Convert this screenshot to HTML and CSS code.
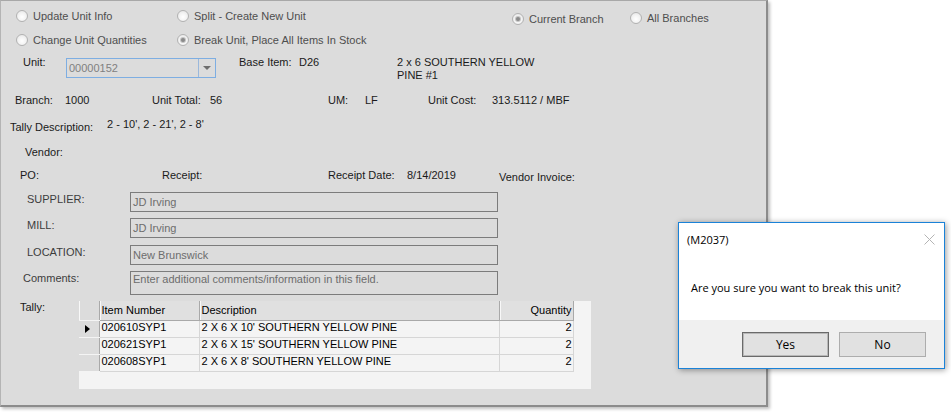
FILE: index.html
```html
<!DOCTYPE html>
<html lang="en">
<head>
    <meta charset="UTF-8">
    <title>Unit Maintenance</title>
    <link rel="stylesheet" href="styles.css">
</head>
<body>
    <div class="window">
        <!-- Mode selection -->
        <div class="row row-modes">
            <label class="radio"><span class="dot"></span>Update Unit Info</label>
            <label class="radio"><span class="dot"></span>Split - Create New Unit</label>
            <label class="radio radio-branch"><span class="dot on"></span>Current Branch</label>
            <label class="radio radio-branch radio-all"><span class="dot"></span>All Branches</label>
        </div>
        <div class="row row-modes2">
            <label class="radio"><span class="dot"></span>Change Unit Quantities</label>
            <label class="radio"><span class="dot on"></span>Break Unit, Place All Items In Stock</label>
        </div>

        <!-- Unit header -->
        <div class="row row-unit">
            <div class="label">Unit:</div>
            <div class="combo">
                <span class="combo-text">00000152</span>
                <span class="combo-btn"><span class="arrow"></span></span>
            </div>
            <div class="label">Base Item:</div>
            <div class="label">D26</div>
            <div class="label desc">2 x 6 SOUTHERN YELLOW<br>PINE #1</div>
        </div>
        <div class="row row-totals">
            <div class="label">Branch:</div>
            <div class="label">1000</div>
            <div class="label">Unit Total:</div>
            <div class="label">56</div>
            <div class="label">UM:</div>
            <div class="label">LF</div>
            <div class="label">Unit Cost:</div>
            <div class="label">313.5112 / MBF</div>
        </div>
        <div class="row row-tally-desc">
            <div class="label drop">Tally Description:</div>
            <div class="label">2 - 10', 2 - 21', 2 - 8'</div>
        </div>
        <div class="row row-vendor">
            <div class="label">Vendor:</div>
        </div>
        <div class="row row-po">
            <div class="label">PO:</div>
            <div class="label">Receipt:</div>
            <div class="label">Receipt Date:</div>
            <div class="label">8/14/2019</div>
            <div class="label drop-sm">Vendor Invoice:</div>
        </div>

        <!-- Receipt details -->
        <div class="row field-row">
            <div class="field-label">SUPPLIER:</div>
            <div class="textbox">JD Irving</div>
        </div>
        <div class="row field-row field-mill">
            <div class="field-label">MILL:</div>
            <div class="textbox">JD Irving</div>
        </div>
        <div class="row field-row">
            <div class="field-label">LOCATION:</div>
            <div class="textbox">New Brunswick</div>
        </div>
        <div class="row field-row field-comments">
            <div class="field-label">Comments:</div>
            <div class="textbox textbox-multi">Enter additional comments/information in this field.</div>
        </div>

        <!-- Tally grid -->
        <div class="row tally-row">
            <div class="label">Tally:</div>
            <div class="grid">
                <table>
                    <thead>
                        <tr>
                            <th class="rowhead"></th>
                            <th class="col-item">Item Number</th>
                            <th class="col-desc">Description</th>
                            <th class="col-qty">Quantity</th>
                        </tr>
                    </thead>
                    <tbody>
                        <tr>
                            <td class="rowhead"><span class="current"></span></td>
                            <td>020610SYP1</td>
                            <td>2 X 6 X 10' SOUTHERN YELLOW PINE</td>
                            <td class="num">2</td>
                        </tr>
                        <tr>
                            <td class="rowhead"></td>
                            <td>020621SYP1</td>
                            <td>2 X 6 X 15' SOUTHERN YELLOW PINE</td>
                            <td class="num">2</td>
                        </tr>
                        <tr>
                            <td class="rowhead"></td>
                            <td>020608SYP1</td>
                            <td>2 X 6 X 8' SOUTHERN YELLOW PINE</td>
                            <td class="num">2</td>
                        </tr>
                    </tbody>
                </table>
            </div>
        </div>
    </div>

    <!-- Confirmation message box -->
    <div class="msgbox">
        <div class="msgbox-title">
            <span>(M2037)</span>
            <svg class="close" width="11" height="11" viewBox="0 0 11 11">
                <path d="M0.5 0.5 L10.5 10.5 M10.5 0.5 L0.5 10.5" stroke="#b4b4b4" stroke-width="1" fill="none"/>
            </svg>
        </div>
        <div class="msgbox-body">Are you sure you want to break this unit?</div>
        <div class="msgbox-footer">
            <button type="button" class="msgbox-btn default">Yes</button>
            <button type="button" class="msgbox-btn">No</button>
        </div>
    </div>
</body>
</html>
```

FILE: styles.css
```css
body {
    margin: 0;
    height: 414px;
    overflow: hidden;
    position: relative;
    background: #ffffff;
    font-family: "Liberation Sans", Arial, sans-serif;
    font-size: 11px;
    line-height: 13px;
    color: #1a1a1a;
}
.window {
    box-sizing: border-box;
    width: 768px;
    height: 407px;
    padding-top: 8px;
    background: #dcdcdc;
    border-top: 1px solid #a8a8a8;
    border-left: 1px solid #b4b4b4;
    border-right: 2px solid #8c8c8c;
    border-bottom: 2px solid #8c8c8c;
    box-shadow: 2px 2px 3px rgba(0, 0, 0, 0.25);
}
.row {
    display: grid;
    align-items: start;
    white-space: nowrap;
}
.label {
    height: 13px;
}
.drop {
    margin-top: 3px;
}
.drop-sm {
    margin-top: 2px;
}

/* radio buttons */
.radio {
    display: flex;
    align-items: center;
    gap: 5px;
    height: 14px;
    color: #4e4e4e;
}
.radio-branch {
    margin-top: 3px;
}
.radio-all {
    margin-top: 2px;
}
.dot {
    box-sizing: border-box;
    width: 12px;
    height: 12px;
    border-radius: 50%;
    border: 1px solid #b2b2b2;
    background: radial-gradient(circle at 50% 60%, #ffffff 0%, #f4f4f4 45%, #e2e2e2 100%);
    display: flex;
    align-items: center;
    justify-content: center;
}
.dot.on::after {
    content: "";
    width: 4px;
    height: 4px;
    border-radius: 50%;
    background: #8a8a8a;
    box-shadow: 0 0 0 1px #c4c4c4;
}
.row-modes {
    height: 24px;
    padding-left: 15px;
    grid-template-columns: 161px 335px 118px auto;
}
.row-modes2 {
    height: 23px;
    padding-left: 15px;
    grid-template-columns: 161px auto;
}

/* unit header */
.row-unit {
    height: 38px;
    padding-left: 22px;
    grid-template-columns: 43px 173px 60px 98px auto;
}
.desc {
    height: auto;
}
.combo {
    box-sizing: border-box;
    width: 150px;
    height: 20px;
    margin-top: 2px;
    border: 1px solid #7eaee2;
    display: flex;
    align-items: center;
    color: #808080;
}
.combo-text {
    flex: 1;
    padding-left: 2px;
}
.combo-btn {
    width: 16px;
    height: 18px;
    border-left: 1px solid #9ab8dc;
    display: flex;
    align-items: center;
    justify-content: center;
}
.arrow {
    width: 0;
    height: 0;
    border-left: 4px solid transparent;
    border-right: 4px solid transparent;
    border-top: 4px solid #6e6e6e;
}
.row-totals {
    height: 24px;
    padding-left: 14px;
    grid-template-columns: 50px 87px 58px 118px 37px 63px 64px auto;
}
.row-tally-desc {
    height: 28px;
    padding-left: 9px;
    grid-template-columns: 97px auto;
}
.row-vendor {
    height: 23px;
    padding-left: 24px;
}
.row-po {
    height: 23px;
    padding-left: 19px;
    grid-template-columns: 142px 166px 79px 92px auto;
}

/* receipt details */
.field-row {
    height: 26px;
    padding-left: 26px;
    grid-template-columns: 103px 368px;
}
.field-mill {
    height: 27px;
}
.field-comments {
    height: 30px;
    padding-left: 22px;
    grid-template-columns: 107px 368px;
}
.field-label {
    margin-top: 1px;
    color: #3c3c3c;
}
.textbox {
    box-sizing: border-box;
    height: 20px;
    line-height: 18px;
    padding-left: 2px;
    border: 1px solid #7c7c7c;
    color: #6d6d6d;
}
.textbox-multi {
    height: 24px;
    line-height: 13px;
    padding-top: 1px;
}

/* tally grid */
.tally-row {
    padding-left: 19px;
    grid-template-columns: 59px 512px;
}
.grid {
    width: 512px;
    height: 88px;
    background: #f4f4f4;
}
.grid table {
    border-collapse: collapse;
    table-layout: fixed;
    color: #000;
}
.grid th,
.grid td {
    box-sizing: border-box;
    padding: 0 2px;
    text-align: left;
    font-weight: normal;
    overflow: hidden;
}
.grid th {
    height: 19px;
    background: #e0e0e0;
    border-right: 1px solid #a9a9a9;
    border-bottom: 1px solid #a9a9a9;
    box-shadow: inset 1px 0 0 #f8f8f8;
}
.grid td {
    height: 17px;
    padding-top: 0;
    padding-bottom: 2px;
    border-right: 1px solid #d6d6d6;
    border-bottom: 1px solid #d6d6d6;
}
.grid .rowhead {
    width: 20px;
    padding: 0;
    background: #dcdcdc;
    border-right: 1px solid #a9a9a9;
    border-bottom: 1px solid #f4f4f4;
}
.col-item {
    width: 100px;
}
.col-desc {
    width: 300px;
}
.grid .col-qty,
.grid .num {
    width: 74px;
    text-align: right;
    padding-right: 1px;
}
.current {
    display: block;
    width: 0;
    height: 0;
    margin: 1px 0 0 6px;
    border-left: 5px solid #000;
    border-top: 4px solid transparent;
    border-bottom: 4px solid transparent;
}

/* message box */
.msgbox {
    position: absolute;
    left: 678px;
    top: 222px;
    box-sizing: border-box;
    width: 267px;
    height: 147px;
    background: #ffffff;
    border: 1px solid #1a82d8;
    box-shadow: 1px 1px 6px rgba(0, 0, 0, 0.4);
    font-family: "Open Sans", "Noto Sans", sans-serif;
    font-size: 11px;
    color: #000;
    display: flex;
    flex-direction: column;
}
.msgbox-title {
    height: 32px;
    padding: 0 9px 0 8px;
    display: flex;
    align-items: center;
    justify-content: space-between;
}
.msgbox-body {
    height: 65px;
    padding-left: 12px;
    display: flex;
    align-items: center;
}
.msgbox-footer {
    box-sizing: border-box;
    height: 48px;
    padding: 12px 18px 0 0;
    background: #f0f0f0;
    display: flex;
    justify-content: flex-end;
    gap: 10px;
}
.msgbox-btn {
    box-sizing: border-box;
    width: 87px;
    height: 25px;
    padding: 0;
    font-family: inherit;
    font-size: 12px;
    color: #000;
    background: #e1e1e1;
    border: 1px solid #adadad;
}
.msgbox-btn.default {
    border: 1px solid #6a6a6a;
    box-shadow: inset 0 0 0 1px #b8b8b8;
}
```
